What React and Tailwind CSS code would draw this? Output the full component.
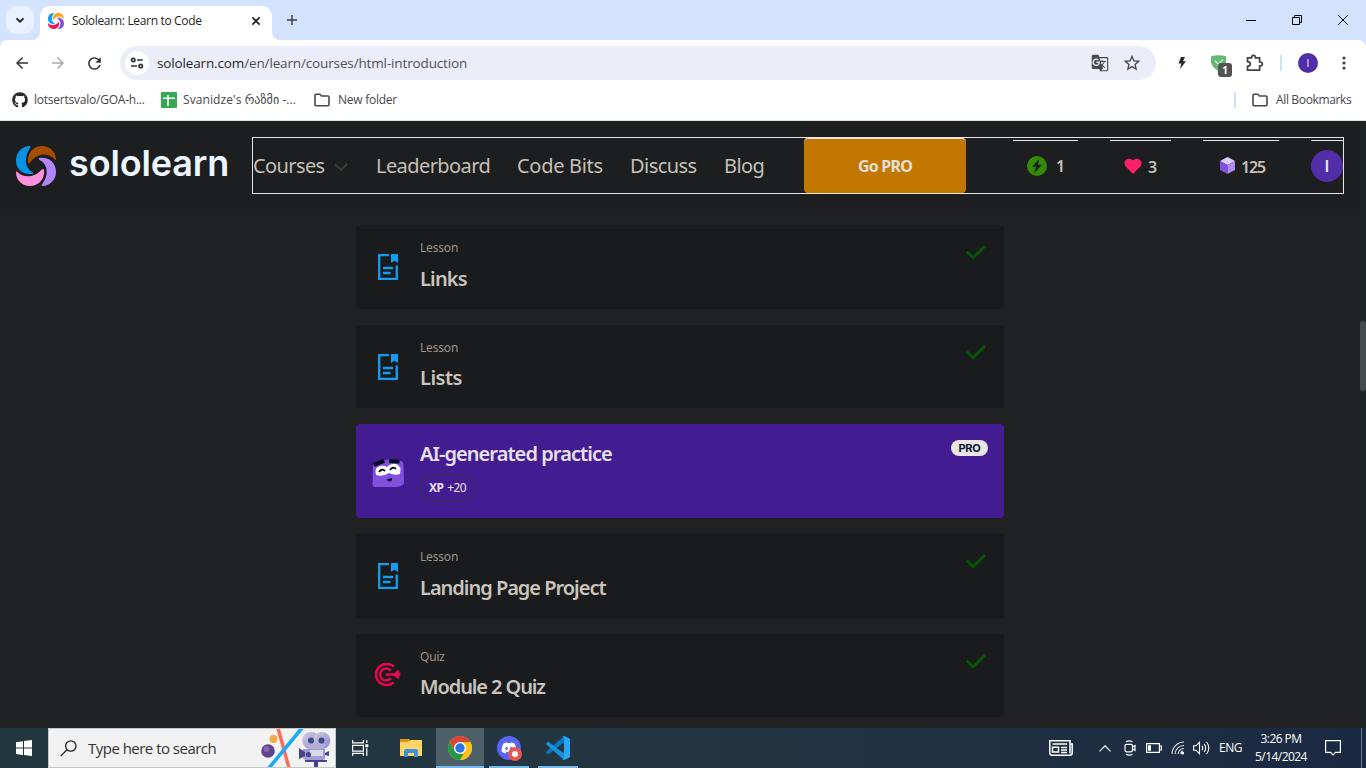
import React from "react";
import { FaGithub, FaDiscord } from "react-icons/fa";
import { MdOutlineStarBorder, MdGTranslate, MdRefresh, MdArrowBack, MdArrowForward } from "react-icons/md";

const ui = "font-['Open_Sans','DejaVu_Sans',sans-serif]";

function Swirl({ className, colors }) {
  const [blue, top, right, bottom] = colors;
  return (
    <svg viewBox="0 0 120 120" className={className}>
      <path fill={blue} d="M42 0C17 0 0 20 0 44C0 70 20 86 48 84C54 83 52 79 47 77C26 65 24 33 42 6C44 2 44 0 42 0Z" />
      <path fill={top} d="M36 50C33 20 52 0 78 0C102 0 119 18 120 39C120 43 117 42 115 39C97 20 65 20 44 47C40 52 37 53 36 50Z" />
      <path fill={right} d="M71 36C96 32 120 48 120 78C120 102 102 119 80 120C75 120 76 117 79 114C98 91 97 55 72 43C67 40 67 37 71 36Z" />
      <path fill={bottom} d="M0 79C0 75 3 76 5 79C20 95 54 97 76 72C82 67 84 68 84 73C87 101 67 120 42 120C18 120 0 103 0 79Z" />
    </svg>
  );
}

function TitleBar() {
  return (
    <div className="flex h-10 shrink-0 bg-[#d3e3fd] pl-[6px] text-[#1f1f1f]">
      <div className="mt-[6px] flex h-[28px] w-[28px] items-center justify-center rounded-[10px] bg-[#e9f1fe]">
        <svg viewBox="0 0 10 10" className="h-[10px] w-[10px]" fill="none" stroke="#1f1f1f" strokeWidth="1.8"><path d="M1.5 3.3 5 6.7 8.5 3.3" /></svg>
      </div>
      <svg viewBox="0 0 8 8" className="-ml-[2px] h-2 w-2 self-end fill-white"><path d="M8 0V8H0A8 8 0 0 0 8 0Z" /></svg>
      <div className="mt-[6px] flex h-[34px] w-[232px] items-center rounded-t-[10px] bg-white pl-2">
        <Swirl className="mb-[5px] h-4 w-4" colors={["#149ef2", "#ffa21a", "#8352d9", "#f5125a"]} />
        <span className="mb-[5px] ml-2 w-[150px] whitespace-nowrap text-[12px] tracking-[-0.33px]">Sololearn: Learn to Code</span>
        <svg viewBox="0 0 10 10" className="mb-[5px] ml-[29px] h-[10px] w-[10px]" stroke="#1f1f1f" strokeWidth="1.6"><path d="m1.4 1.4 7.2 7.2m0-7.2-7.2 7.2" /></svg>
      </div>
      <svg viewBox="0 0 8 8" className="h-2 w-2 self-end fill-white"><path d="M0 0V8H8A8 8 0 0 1 0 0Z" /></svg>
      <svg viewBox="0 0 10 10" className="mt-[15px] ml-[7px] h-[10px] w-[10px]" stroke="#3c3c3c" strokeWidth="1.4"><path d="M5 0V10M0 5H10" /></svg>
      <div className="ml-auto mr-[18px] flex items-center gap-9">
        <svg viewBox="0 0 10 10" className="h-[10px] w-[10px]" stroke="#000" strokeWidth="1"><path d="M0 5.5H10" /></svg>
        <svg viewBox="0 0 10 10" className="h-[10px] w-[10px]" fill="none" stroke="#000" strokeWidth="1"><path d="M.5 2.5H7.5V9.5H.5ZM2.5 2.5V.5H9.5V7.5H7.5" /></svg>
        <svg viewBox="0 0 10 10" className="h-[10px] w-[10px]" stroke="#000" strokeWidth="1"><path d="m0 0 10 10m0-10L0 10" /></svg>
      </div>
    </div>
  );
}

function Puzzle() {
  return (
    <svg viewBox="0 0 18 18" className="ml-[20px] h-[18px] w-[18px]" fill="none" stroke="#3f4144" strokeWidth="1.7">
      <path d="M1.5 3.8H5.6Q5.4 1.4 7.5 1.4T9.4 3.8H13.6V8Q16.4 7.9 16.4 10T13.6 12V16.2H1.5V12.4Q4.3 12.2 4.3 10T1.5 7.6Z" />
    </svg>
  );
}

function Toolbar() {
  return (
    <div className="flex h-[46px] shrink-0 items-center rounded-t-[8px] bg-white pl-[13px] text-[#3f4246]">
      <MdArrowBack className="h-[18px] w-[18px] text-[#333538]" />
      <MdArrowForward className="ml-[18px] h-[18px] w-[18px] text-[#a9abae]" />
      <MdRefresh className="ml-[18px] h-[19px] w-[19px] text-[#333538]" />
      <div className="ml-[16px] flex h-[34px] w-[1036px] items-center rounded-full bg-[#ebeef8] pl-[5px]">
        <div className="flex h-6 w-6 items-center justify-center rounded-full bg-white">
          <svg viewBox="0 0 14 12" className="h-3 w-[14px]" fill="none" stroke="#303236" strokeWidth="1.7"><circle cx="3.2" cy="3" r="1.7" /><path d="M7 3H12.7M1 9H7" /><circle cx="10.7" cy="9" r="1.7" /></svg>
        </div>
        <span className="ml-2 whitespace-nowrap text-[13.5px] tracking-[-0.14px] text-[#4b4e55]"><span className="text-[#1f1f1f]">sololearn.com</span>/en/learn/courses/html-introduction</span>
        <MdGTranslate className="ml-auto h-[18px] w-[18px] text-[#47494d]" />
        <MdOutlineStarBorder className="mr-[14px] ml-[13px] h-[20px] w-[20px] text-[#47494d]" />
      </div>
      <svg viewBox="0 0 8 12" className="ml-[22px] h-3 w-2 fill-[#26272a]"><path d="M3 0H7L5 4.2H8L2 12 3.3 6.5H.5Z" /></svg>
      <div className="relative ml-[25px] h-4 w-[15px]">
        <svg viewBox="0 0 15 16" className="h-4 w-[15px]"><path fill="#63b875" d="M0 1.2Q7.5-.8 15 1.2V7Q14 12.5 7.5 16 1 12.5 0 7Z" /><path fill="none" stroke="#c4e6cb" strokeWidth="1.5" d="m4 5.5 3.2 3.7L12 4.5" /></svg>
        <span className="absolute top-[8px] left-[7px] flex h-[14px] w-[14px] items-center justify-center rounded-[3px] bg-[#535353] text-[10px] font-bold text-white">1</span>
      </div>
      <Puzzle />
      <div className="ml-[16px] h-4 w-[2px] bg-[#d0e2fb]" />
      <div className="ml-[16px] flex h-5 w-5 items-center justify-center rounded-full bg-[#512da8] text-[10px] text-white">I</div>
      <svg viewBox="0 0 4 16" className="ml-[24px] h-4 w-1 fill-[#3f4144]"><circle cx="2" cy="3" r="1.6" /><circle cx="2" cy="8" r="1.6" /><circle cx="2" cy="13" r="1.6" /></svg>
    </div>
  );
}

function Folder({ className }) {
  return <svg viewBox="0 0 16 14" className={"h-[14px] w-4 " + className} fill="none" stroke="#45474b" strokeWidth="1.6"><path d="M1 11.7V2.2Q1 1.3 2 1.3H5.8L7.5 3H14Q15 3 15 4V11.7Q15 12.7 14 12.7H2Q1 12.7 1 11.7Z" /></svg>;
}

function Bookmarks() {
  return (
    <div className="flex h-[35px] shrink-0 items-center border-b border-[#dfe3df] bg-white pr-[15px] pb-[6px] pl-3 text-[12px] whitespace-nowrap text-[#45474b]">
      <FaGithub className="h-4 w-4 text-[#24292e]" />
      <span className="ml-[6px] w-[127px] tracking-[-0.23px]">lotsertsvalo/GOA-h...</span>
      <svg viewBox="0 0 16 16" className="h-4 w-4"><rect width="16" height="16" rx="1" fill="#34a853" /><path stroke="#fff" strokeWidth="1.6" d="M2 6.3H14M7 3V14" /></svg>
      <span className="ml-[6px] w-[131px] tracking-[0.08px]">Svanidze's რაზმი -...</span>
      <Folder className="" />
      <span className="ml-2 tracking-[-0.25px]">New folder</span>
      <div className="ml-auto h-4 w-[2px] bg-[#d0e2fb]" />
      <Folder className="ml-4" />
      <span className="ml-2 w-[75px] tracking-[-0.35px]">All Bookmarks</span>
    </div>
  );
}

function Header() {
  return (
    <header className="flex h-[89px] shrink-0 bg-[#1c1e1f] pl-4 font-['Noto_Sans',sans-serif] text-[#c6c1b9]">
      <Swirl className="mt-[25px] h-[40px] w-[40px]" colors={["#0a91e6", "#a84d00", "#b284ff", "#ff8fdf"]} />
      <span className="mt-[20px] ml-[13px] w-[166px] font-['Inter',sans-serif] text-[36px] leading-[44px] font-semibold tracking-[-0.15px] text-[#edf6ff]">sololearn</span>
      <nav className="mt-4 ml-[17px] flex h-[57px] w-[1092px] border border-[#e8e6e3] text-[20px] leading-[55px] whitespace-nowrap">
        <span className="w-[81px] tracking-[-0.6px]">Courses</span>
        <svg viewBox="0 0 14 8" className="mt-[25px] h-2 w-[14px]" fill="none" stroke="#3f3f38" strokeWidth="1.8"><path d="m1 1 6 6 6-6" /></svg>
        <span className="ml-[28px] w-[141px] tracking-[-0.58px]">Leaderboard</span>
        <span className="w-[113px] tracking-[-0.3px]">Code Bits</span>
        <span className="w-[94px] tracking-[-0.55px]">Discuss</span>
        <span className="w-[80px] tracking-[-0.6px]">Blog</span>
        <div className="h-[55px] w-[162px] rounded-[4px] border-t border-[#e8e6e3] bg-[#c27800] text-center text-[16px] font-bold leading-[54px] tracking-[-0.8px] text-[#e4ded5]">Go PRO</div>
        <div className="mt-[2px] ml-[47px] flex w-[65px] border-t border-[#e8e6e3] pl-[14px] text-[16px] leading-[51px] font-semibold">
          <svg viewBox="0 0 20 20" className="mt-[15px] h-5 w-5"><circle cx="10" cy="10" r="10" fill="#338a05" /><path fill="#1c1e1f" d="M12.2 3 5 10.8H9L7.4 17 15 8.8H11Z" /></svg>
          <span className="ml-[9px]">1</span>
        </div>
        <div className="mt-[2px] ml-[32px] flex w-[61px] border-t border-[#e8e6e3] pl-[14px] text-[16px] leading-[52px] font-semibold">
          <svg viewBox="0 0 18 16" className="mt-[17px] h-4 w-[18px] fill-[#ff1f6b]"><path d="M9 16 1.4 8.2C-1.8 3.5 4-2.3 9 2.4 14-2.3 19.8 3.5 16.6 8.2Z" /></svg>
          <span className="ml-[6px]">3</span>
        </div>
        <div className="mt-[2px] ml-[32px] flex w-[76px] border-t border-[#e8e6e3] pl-[17px] text-[16px] leading-[52px] font-semibold">
          <svg viewBox="0 0 15 17" className="mt-[16px] h-[17px] w-[15px]"><path fill="#d9cdfb" d="m7.5 0 7.5 4-7.5 4L0 4Z" /><path fill="#8151e0" d="m0 4 7.5 4v9L0 13Z" /><path fill="#af8cf5" d="m15 4-7.5 4v9l7.5-4Z" /></svg>
          <span className="ml-[6px] tracking-[-1.2px]">125</span>
        </div>
        <div className="mt-[2px] ml-[32px] w-[32px] border-t border-[#e8e6e3]">
          <div className="mt-[9px] flex h-8 w-8 items-center justify-center rounded-full bg-[#512da8] font-['Roboto',sans-serif] text-[17px] font-medium leading-none text-[#e8e6e3]">I</div>
        </div>
      </nav>
    </header>
  );
}

function LessonIcon() {
  return (
    <svg viewBox="0 0 20 26" className="h-[26px] w-5" fill="none" stroke="#149df0" strokeWidth="2.3">
      <path d="M11 1.2H1.2V24.8H18.8V11.5M5 14H15M5 19H12.5" />
      <path fill="#149df0" stroke="none" d="M13 0H20V9L16.5 6.8 13 9Z" />
    </svg>
  );
}

function QuizIcon() {
  return (
    <svg viewBox="0 0 26 24" className="h-6 w-[26px]" fill="none" stroke="#ec0650" strokeWidth="2.5">
      <path d="M18.8 3.7A10.6 10.6 0 1 0 18.8 19.3M15.8 7.7A6 6 0 1 0 15.8 15.3M10.5 11.5H22" />
      <path fill="#ec0650" stroke="none" d="M18.5 11.5 22 7.5H24.5L23.8 10H26L24.5 11.5 26 13H23.8L24.5 15.5H22Z" />
    </svg>
  );
}

function Card({ kind, title, height, tracking }) {
  return (
    <div className={"flex rounded-[4px] bg-[#191b1c] pr-[18px] pl-4 " + height}>
      <div className={"flex h-[84px] w-8 items-center justify-center " + (kind === "Quiz" ? "pb-[2px]" : "")}>{kind === "Quiz" ? <QuizIcon /> : <LessonIcon />}</div>
      <div className="ml-4 flex flex-col pt-[14px]">
        <span className="text-[12px] leading-[17px] tracking-[-0.17px] text-[#9d9488]">{kind}</span>
        <span className={"text-[20px] leading-[28px] font-semibold text-[#c9c4bc] " + tracking + (height === "h-[84px]" ? " mt-[9px]" : " mt-2")}>{title}</span>
      </div>
      <svg viewBox="0 0 20 15" className="mt-5 ml-auto h-[15px] w-5" fill="none" stroke="#065406" strokeWidth="3"><path d="M.8 6.5 7 12.7 19 1.2" /></svg>
    </div>
  );
}

function Robot() {
  return (
    <svg viewBox="0 0 32 30" className="h-[30px] w-8">
      <path fill="#8150dc" d="M1 8Q1 6 3 5L14 2Q20 0 28 2.5 31.5 3.5 31.5 7L32 25Q31 28 25 29H3Q.5 29 .5 26Z" />
      <path fill="#fff" d="M4 17Q2 9 8 8 11 7 15 9 19 5 24 6 30 8 28 16 22 18 17 15 11 19 4 17Z" />
      <path stroke="#02091f" strokeWidth="4" d="m1.8 7 10.5-4.2M17 3l10.5.5" />
      <path fill="none" stroke="#02091f" strokeWidth="1.8" d="M7 14q3-4 6-1M18 12q3-4 6-1" />
      <path fill="#02091f" d="M15 21.5 20 20Q20 23.5 17.5 23.5 16 23.5 15 21.5Z" />
    </svg>
  );
}

function AiCard() {
  return (
    <div className="flex h-[94px] rounded-[4px] bg-[#441c91] px-4 text-[#e6e1e6]">
      <div className="flex w-8 items-center justify-center pt-[3px]"><Robot /></div>
      <div className="ml-4 flex flex-col items-start pt-4">
        <span className="text-[20px] leading-[28px] font-semibold tracking-[-0.94px]">AI-generated practice</span>
        <span className="mt-[7px] flex h-[26px] w-[55px] items-center rounded-full border border-[#363545] pb-px pl-2 text-[12px] whitespace-nowrap tracking-[-0.65px]"><b className="mr-1 font-bold">XP</b>+20</span>
      </div>
      <span className="mt-4 ml-auto flex h-4 w-[37px] items-center justify-center rounded-full bg-[#e8e6e3] font-['Inter',sans-serif] text-[11px] font-bold tracking-[-0.2px] text-[#0d1433]">PRO</span>
    </div>
  );
}

function Camera() {
  return (
    <svg viewBox="0 0 74 38" className="h-[38px] w-[74px] shrink-0">
      <defs><linearGradient id="reel" x1="0" y1="0" x2="1" y2="1"><stop stopColor="#d6d0da" /><stop offset="1" stopColor="#8c86d5" /></linearGradient></defs>
      <circle cx="12.5" cy="10" r="4" fill="#f0ac45" /><circle cx="7" cy="22" r="6.8" fill="#61438c" /><circle cx="5.5" cy="20" r="3" fill="#8766ae" />
      <path stroke="#ff6b55" strokeWidth="3.4" d="M17-1 28 39" /><path stroke="#1aaaf5" strokeWidth="3.6" d="M41-1 8 39" />
      <circle cx="50" cy="11.5" r="8.8" fill="url(#reel)" /><circle cx="60.5" cy="11.5" r="8.8" fill="url(#reel)" /><path fill="#b5afd5" d="M47 15H64V21H47Z" />
      <path fill="#a19bd6" d="M42 20H64V29Q64 31 62 31H45Q43 31 42 29Z" /><path fill="#d9dae4" d="M49 21H62V27H49Z" />
      <path fill="#46438c" d="m38 19 6 4v4l-6 3ZM64 24l4-2v5l-4-1ZM44 31H66V33H57V38H53V33H44Z" />
      <circle cx="50" cy="11.5" r="3" fill="#3b4a8b" /><circle cx="60.5" cy="11.5" r="3" fill="#3b4a8b" /><circle cx="47.5" cy="25.5" r="2.6" fill="#4a468f" />
    </svg>
  );
}

function Taskbar() {
  return (
    <div className="flex h-10 shrink-0 items-center bg-linear-to-r from-[#213840] via-[#233542] to-[#1a2942] text-white">
      <div className="flex w-12 justify-center">
        <svg viewBox="0 0 16 16" className="h-4 w-4 fill-white"><path d="M0 2.2 7 1.2V7.6H0ZM8 1 16 0V7.6H8ZM0 8.5H7V14.9L0 13.9ZM8 8.5H16V16L8 15Z" /></svg>
      </div>
      <div className="flex h-10 w-[288px] items-center border border-[#c5c7c8] bg-[#f2f2f2] text-[#333]">
        <svg viewBox="0 0 17 17" className="ml-[11px] h-[17px] w-[17px] shrink-0" fill="none" stroke="#222" strokeWidth="1.3"><circle cx="10.8" cy="6" r="5.2" /><path d="m7 9.8-6.3 6.3" /></svg>
        <span className="ml-[11px] w-[173px] shrink-0 text-[15px] tracking-[-0.52px] whitespace-nowrap">Type here to search</span>
        <Camera />
      </div>
      <svg viewBox="0 0 17 16" className="ml-4 h-4 w-[17px]" fill="none" stroke="#fff" strokeWidth="1.2"><path d="M.6 0V2.8H11.4V0M.6 5.3H11.4V11.2H.6ZM.6 16V13.3H11.4V16M14.8 0V3M14.8 8V16" /><path fill="#fff" stroke="none" d="M13.3 4.2h3v3h-3Z" /></svg>
      <svg viewBox="0 0 22 18" className="ml-[31px] h-[18px] w-[22px]"><path fill="#d9971b" d="M0 0H9L11 2V5H0Z" /><path fill="#ffd568" d="M0 3H8L11 1H22V17H0Z" /><path fill="#3a93da" d="M4 12Q4 10 6 10H16Q18 10 18 12V18H14V14H8V18H4Z" /></svg>
      <div className="ml-[14px] flex h-10 w-12 items-center justify-center border-b-2 border-[#76b9ed] bg-[#4d6068]">
        <svg viewBox="0 0 24 24" className="mt-[1px] h-6 w-6"><circle cx="12" cy="12" r="12" fill="#fcc21b" /><path fill="#dc4437" d="M1.6 6A12 12 0 0 1 22.4 6H12L6.8 15Z" /><path fill="#279847" d="M1.6 6 6.8 15 12 18H17.2L12 24A12 12 0 0 1 1.6 6Z" /><path fill="#fcc21b" d="M12 24 17.2 15 12 6H22.4A12 12 0 0 1 12 24Z" /><circle cx="12" cy="12" r="6" fill="#fff" /><circle cx="12" cy="12" r="4.7" fill="#2c75e8" /></svg>
      </div>
      <div className="ml-[5px] flex h-10 w-10 items-center justify-center border-b-2 border-[#76b9ed]">
        <div className="relative mt-[1px] flex h-6 w-6 items-center justify-center rounded-full bg-[#5865f2]">
          <FaDiscord className="h-4 w-4 text-white" />
          <span className="absolute top-[11px] left-[11px] flex h-[14px] w-[14px] items-center justify-center rounded-full bg-[#ed5555]"><span className="h-[6px] w-[6px] rounded-full bg-white" /></span>
        </div>
      </div>
      <div className="ml-[9px] flex h-10 w-10 items-center justify-center border-b-2 border-[#76b9ed]">
        <svg viewBox="0 0 24 24" className="mt-[1px] h-6 w-6"><path fill="#0878c5" d="M18 0V6.5L3 17.8Q2 18.5 1.2 17.8L.3 17Q-.4 16.2.4 15.4Z" /><path fill="#1593df" d="M18 24V17.5L3 6.2Q2 5.5 1.2 6.2L.3 7Q-.4 7.8.4 8.6Z" /><path fill="#29a9f5" d="m18 0 5 2.3Q24 3 24 4V20Q24 21 23 21.7L18 24Q16.8 24 16.5 23 18 23.5 18 21.8V2Q18 .6 16.5 1 16.9 0 18 0Z" /></svg>
      </div>
      <div className="ml-auto flex h-10 items-center">
        <svg viewBox="0 0 24 16" className="h-4 w-6" fill="none" stroke="#fff" strokeWidth="1.5"><path d="M21 13.5V.8H.8V13Q.8 15.2 3 15.2H21Q23.2 15.2 23.2 13V4H21M3.5 4H18M3.5 7.2H9.5V12H3.5ZM12 7.5H18M12 10H18M12 12.5H18" /></svg>
        <svg viewBox="0 0 12 7" className="ml-[26px] h-[7px] w-3" fill="none" stroke="#fff" strokeWidth="1.2"><path d="m.5 6.3 5.5-5.5 5.5 5.5" /></svg>
        <svg viewBox="0 0 12 16" className="ml-[13px] h-4 w-3" fill="none" stroke="#fff" strokeWidth="1.2"><path d="M2 1.8Q5 0 8.5 1.8M2 14.2Q5 16 8.5 14.2" /><rect x="1" y="4.3" width="7.5" height="7.5" rx="1.5" /><path d="m8.5 7 2.5-1.5v5L8.5 9" /></svg>
        <svg viewBox="0 0 16 10" className="ml-[10px] h-[10px] w-4" fill="none" stroke="#fff" strokeWidth="1.2"><path d="M.6.6H13.4V9.4H.6ZM14 3H15.4V7H14" /><path fill="#fff" stroke="none" d="M2 2.2H5V7.8H2Z" /></svg>
        <svg viewBox="0 0 14 14" className="ml-[9px] h-[14px] w-[14px]" fill="none" stroke="#e5e9ee" strokeWidth="1.1"><path d="M1 13A12 12 0 0 1 13 1M4 13A9 9 0 0 1 13 4.5M7 13A6 6 0 0 1 13 7.5" /><circle cx="11.5" cy="12" r="1.6" fill="#fff" stroke="none" /><path d="M9.5 12.5Q10 10.5 12 10" /></svg>
        <svg viewBox="0 0 18 14" className="ml-2 h-[14px] w-[18px]" fill="none" stroke="#fff" strokeWidth="1.1"><path d="M.6 4.8H3L6.5 1.2V12.8L3 9.2H.6ZM9 4.8Q10.5 7 9 9.2M11.3 3Q14 7 11.3 11M13.6 1Q18 7 13.6 13" /></svg>
        <span className="ml-[8px] w-[28px] text-[12px] tracking-[-0.5px]">ENG</span>
        <div className="flex w-[68px] flex-col items-center text-[12px] leading-[18px] tracking-[-0.55px] whitespace-nowrap"><span>3:26 PM</span><span>5/14/2024</span></div>
        <svg viewBox="0 0 16 16" className="mr-5 ml-[10px] h-4 w-4" fill="none" stroke="#fff" strokeWidth="1.2"><path d="M.6.6H15.4V12.4H10.5L8 15 5.5 12.4H.6Z" /></svg>
        <div className="mr-1 h-10 w-px bg-[#6c7788]" />
      </div>
    </div>
  );
}

export default function App() {
  return (
    <div className={"flex h-[768px] w-[1366px] flex-col overflow-hidden bg-[#d3e3fd] " + ui}>
      <TitleBar />
      <Toolbar />
      <Bookmarks />
      <div className="flex h-[607px] shrink-0 bg-[#1f2122]">
        <div className="flex w-[1360px] flex-col">
          <Header />
          <main className="mt-[15px] ml-[356px] flex w-[648px] flex-col gap-4 font-['Noto_Sans',sans-serif]">
            <Card kind="Lesson" title="Links" height="h-[84px]" tracking="tracking-[-0.85px]" />
            <Card kind="Lesson" title="Lists" height="h-[83px]" tracking="tracking-[-0.5px]" />
            <AiCard />
            <Card kind="Lesson" title="Landing Page Project" height="h-[84px]" tracking="tracking-[-1.02px]" />
            <Card kind="Quiz" title="Module 2 Quiz" height="h-[83px]" tracking="tracking-[-1.1px]" />
          </main>
        </div>
        <div className="w-[6px] bg-[#1e2323] pt-[200px]"><div className="h-[70px] rounded-[3px] bg-[#454a4d]" /></div>
      </div>
      <Taskbar />
    </div>
  );
}
